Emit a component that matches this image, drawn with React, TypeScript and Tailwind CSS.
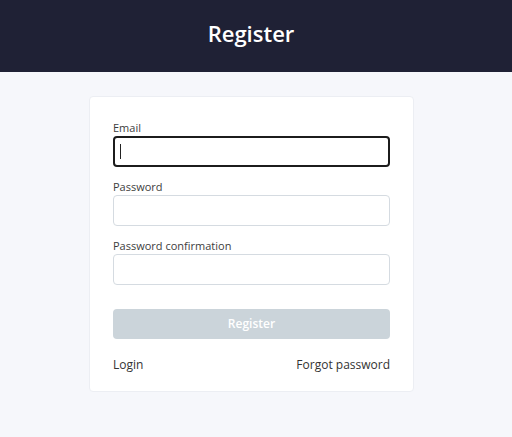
export default function App() {
  return (
    <div className="min-h-screen bg-[#f6f7fb]" style={{ fontFamily: '"Open Sans", "Noto Sans", sans-serif' }}>
      <header className="h-[72px] bg-[#1f2135] flex items-center justify-center pr-[10px]">
        <h1 className="text-[22px] font-semibold text-white leading-none -mt-[6px]">Register</h1>
      </header>
      <main className="pr-[9px] pt-[24px]">
        <div className="mx-auto w-[325px] bg-white border border-[#eceef3] rounded-[4px] px-[23px] pt-[23px] pb-[16px]">
          <form className="flex flex-col">
            <label className="text-[11px] text-[#3d3d3d] leading-[16px]">Email</label>
            <div className="relative">
              <input className="w-full h-[31px] rounded-[4px] border-2 border-[#1c1c1c] bg-white outline-none px-[6px]" />
              <span className="absolute left-[7px] top-[8px] w-[1px] h-[15px] bg-[#222]" />
            </div>
            <label className="mt-[12px] text-[11px] text-[#3d3d3d] leading-[16px]">Password</label>
            <input type="password" className="w-full h-[31px] rounded-[4px] border border-[#d5dbe1] bg-white outline-none px-[6px]" />
            <label className="mt-[12px] text-[11px] text-[#3d3d3d] leading-[16px]">Password confirmation</label>
            <input type="password" className="w-full h-[31px] rounded-[4px] border border-[#d5dbe1] bg-white outline-none px-[6px]" />
            <button type="button" disabled className="mt-[24px] h-[30px] rounded-[4px] bg-[#cbd4da] text-white text-[12px] font-semibold">
              Register
            </button>
            <div className="mt-[16px] flex justify-between text-[12px] text-[#333] leading-[20px]">
              <a href="#">Login</a>
              <a href="#">Forgot password</a>
            </div>
          </form>
        </div>
      </main>
    </div>
  );
}
